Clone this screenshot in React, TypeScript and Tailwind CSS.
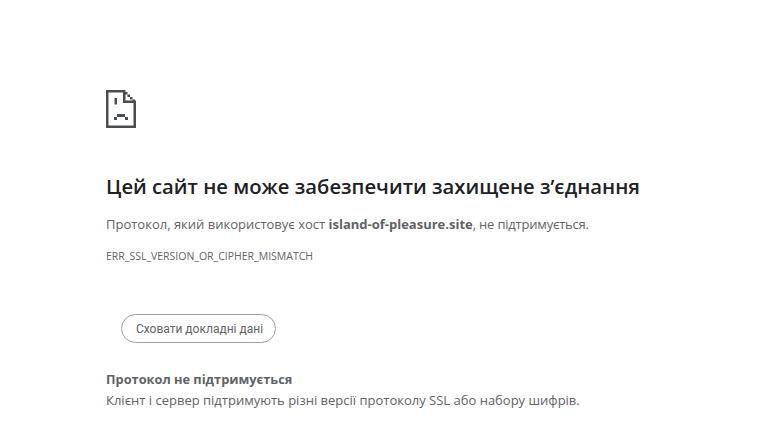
function SadTab() {
  return (
    <svg width="30" height="38" viewBox="0 0 30 38" className="block" fill="#4a4d51">
      <path d="M0 0h18v2.500H2.500v33h25V13H30v25H0z" />
      <path d="M17 0h2.500v10.500H30V13H17z" />
      <path d="M19 2h2.500v2.500H19zM21.500 4.500H24V7h-2.500zM24 7h2.500v2.500H24zM26.500 9.500H29V12h-2.500z" />
      <path d="M8.500 8H11v6.500H8.500z" />
      <path d="M11 24h8v3h-8zM8 27h3v3H8zM19 27h3v3h-3z" />
    </svg>
  );
}

export default function App() {
  return (
    <div className="h-[439px] overflow-hidden bg-white pl-[106px] pt-[90px] font-['Open_Sans',sans-serif]">
      <SadTab />
      <h1 className="mt-[44px] text-[20.25px] leading-[28px] font-semibold text-[#202124]">
        Цей сайт не може забезпечити захищене з’єднання
      </h1>
      <p className="mt-[14px] text-[13px] leading-[20px] text-[#5f6368]">
        Протокол, який використовує хост <span className="font-bold">island-of-pleasure.site</span>
        <span className="tracking-[-0.2px]">, не підтримується.</span>
      </p>
      <p className="mt-[15px] text-[10.5px] leading-[14px] text-[#5f6368]">ERR_SSL_VERSION_OR_CIPHER_MISMATCH</p>
      <button className="mt-[51px] ml-[15px] block h-[29px] w-[155px] rounded-full border border-[#9aa0a6] bg-white pl-[2px] font-['Roboto',sans-serif] text-[12px] text-[#5f6368]">
        Сховати докладні дані
      </button>
      <h2 className="mt-[27px] text-[12.8px] leading-[18px] font-bold text-[#5f6368]">Протокол не підтримується</h2>
      <p className="mt-[2px] text-[13px] leading-[20px] text-[#5f6368]">
        Клієнт і сервер підтримують різні версії протоколу SSL або набору шифрів.
      </p>
    </div>
  );
}
